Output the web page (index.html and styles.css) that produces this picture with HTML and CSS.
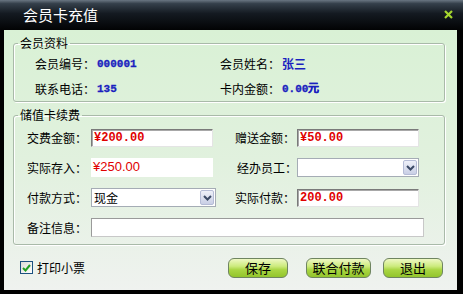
FILE: index.html
```html
<!DOCTYPE html>
<html lang="zh-CN">
<head>
    <meta charset="UTF-8">
    <title>会员卡充值</title>
    <link rel="stylesheet" href="styles.css">
</head>
<body>

    <div class="window">
        <div class="titlebar">
            <span class="title">会员卡充值</span>
            <span class="close">
                <svg width="9" height="9" viewBox="0 0 9 9"><path d="M1 1L8 8M8 1L1 8" stroke="#a6d62e" stroke-width="2.2"/></svg>
            </span>
        </div>

        <div class="content">
            <!-- member info -->
            <fieldset class="group">
                <legend>会员资料</legend>
                <div class="info-grid">
                    <span class="label">会员编号：</span><span class="val mono">000001</span>
                    <span class="label">会员姓名：</span><span class="val">张三</span>
                    <span class="label">联系电话：</span><span class="val mono">135</span>
                    <span class="label">卡内金额：</span><span class="val mono">0.00元</span>
                </div>
            </fieldset>

            <!-- recharge form -->
            <fieldset class="group recharge">
                <legend>储值卡续费</legend>
                <div class="form-grid">
                    <span class="label">交费金额：</span>
                    <div class="field sunken money">¥200.00</div>
                    <span class="label">赠送金额：</span>
                    <div class="field sunken money">¥50.00</div>

                    <span class="label">实际存入：</span>
                    <div class="field plain">¥250.00</div>
                    <span class="label shift">经办员工：</span>
                    <div class="field select">
                        <span class="sel-text"></span>
                        <span class="sel-btn"><svg width="9" height="6" viewBox="0 0 9 6"><path d="M1 1L4.5 4.5L8 1" fill="none" stroke="#3b4a66" stroke-width="2"/></svg></span>
                    </div>

                    <span class="label">付款方式：</span>
                    <div class="field select wide">
                        <span class="sel-text">现金</span>
                        <span class="sel-btn"><svg width="9" height="6" viewBox="0 0 9 6"><path d="M1 1L4.5 4.5L8 1" fill="none" stroke="#3b4a66" stroke-width="2"/></svg></span>
                    </div>
                    <span class="label">实际付款：</span>
                    <div class="field sunken money">200.00</div>

                    <span class="label">备注信息：</span>
                    <div class="field remark"></div>
                </div>
            </fieldset>

            <div class="footer">
                <label class="check">
                    <span class="box"><svg width="9" height="8" viewBox="0 0 9 8"><path d="M1 4L3.5 6.5L8 1" fill="none" stroke="#22a022" stroke-width="2"/></svg></span>
                    打印小票
                </label>
                <div class="buttons">
                    <button class="btn">保存</button>
                    <button class="btn wide">联合付款</button>
                    <button class="btn">退出</button>
                </div>
            </div>
        </div>
    </div>

</body>
</html>
```

FILE: styles.css
```css
body {
    margin: 0;
    padding: 0;
    font-family: "Noto Sans CJK SC", "Liberation Sans", sans-serif;
    font-size: 12px;
    color: #000;
    background-color: #000;
}
.window {
    width: 463px;
    height: 294px;
    background-color: #000;
    display: flex;
    flex-direction: column;
}
.titlebar {
    height: 30px;
    flex: none;
    display: flex;
    align-items: center;
    justify-content: space-between;
    padding: 0 10px 0 23px;
    background: linear-gradient(#6a7682 0, #35404b 12%, #141a21 45%, #020304 100%);
}
.title {
    color: #fff;
    font-size: 15px;
    line-height: 18px;
}
.close {
    display: flex;
    margin-top: -2px;
}
.content {
    flex: 1;
    margin: 0 6px 4px 4px;
    padding: 6px 12px 0 9px;
    display: flex;
    flex-direction: column;
    background: linear-gradient(#d9f1d5 0, #e1f1de 50%, #eff2ef 100%);
}
.group {
    margin: 0;
    padding: 0 4px 2px 4px;
    border: 1px solid #a9baa9;
    border-radius: 3px;
    box-shadow: inset 1px 1px 0 #fff, 1px 1px 0 #fff;
}
.group legend {
    padding: 0 2px;
    line-height: 14px;
}
.recharge {
    margin-top: 6px;
    padding-bottom: 7px;
}
.info-grid {
    display: grid;
    grid-template-columns: 62px 123px 62px auto;
    grid-auto-rows: 20px;
    row-gap: 5px;
    margin: 4px 0 0 17px;
    line-height: 20px;
}
.val {
    color: #1a1fbf;
    font-weight: bold;
}
.mono {
    font-family: "Liberation Mono", monospace;
    font-size: 11px;
    -webkit-text-stroke: 0.3px #1a1fbf;
}
.form-grid {
    display: grid;
    grid-template-columns: 64px 144px 62px 122px;
    grid-auto-rows: 19px;
    row-gap: 11px;
    align-items: center;
    margin: 6px 0 0 9px;
    line-height: 19px;
}
.label.shift {
    padding-left: 2px;
}
.field {
    box-sizing: border-box;
    width: 122px;
    height: 19px;
    background-color: #fff;
    padding-left: 2px;
}
.sunken {
    height: 18px;
    border: 1px solid;
    border-color: #7a7a7a #e4e4e4 #e4e4e4 #7a7a7a;
    box-shadow: inset 1px 1px 0 #a8a8a8;
    line-height: 16px;
}
.money {
    color: #e00000;
    font-family: "Liberation Mono", monospace;
    font-weight: bold;
    font-size: 12px;
}
.plain {
    color: #e00000;
    font-family: "Liberation Sans", sans-serif;
    font-size: 13px;
    line-height: 18px;
}
.select {
    display: flex;
    align-items: center;
    justify-content: space-between;
    border: 1px solid #a5acb5;
    padding: 0 1px 0 2px;
    line-height: 17px;
}
.select.wide {
    width: 125px;
}
.sel-btn {
    width: 14px;
    height: 15px;
    box-sizing: border-box;
    display: flex;
    align-items: center;
    justify-content: center;
    border: 1px solid #b5bcd6;
    border-radius: 2px;
    background: linear-gradient(#eef0f9, #c9cfe5);
}
.remark {
    grid-column: 2 / 5;
    width: 333px;
    border: 1px solid;
    border-color: #9a9a9a #c8c8c8 #c8c8c8 #9a9a9a;
}
.footer {
    flex: 1;
    display: flex;
    align-items: center;
    justify-content: space-between;
    padding: 0 2px 0 7px;
}
.check {
    display: flex;
    align-items: center;
    gap: 4px;
    font-size: 12px;
}
.box {
    width: 13px;
    height: 13px;
    box-sizing: border-box;
    border: 1px solid #1c5180;
    background: linear-gradient(135deg, #dcdcd6, #fff);
    display: flex;
    align-items: center;
    justify-content: center;
}
.buttons {
    display: flex;
    margin-top: 1px;
}
.btn {
    width: 60px;
    height: 20px;
    margin-left: 18px;
    padding: 0;
    font-family: "Noto Sans CJK SC", sans-serif;
    font-size: 13px;
    line-height: 18px;
    color: #000;
    border: 1px solid #6f8560;
    border-radius: 6px;
    background: linear-gradient(#eef8c4 0, #cdeb7e 40%, #a9d643 60%, #93c52c 100%);
}
.btn.wide {
    width: 65px;
}
.btn.wide + .btn {
    margin-left: 12px;
}
```
